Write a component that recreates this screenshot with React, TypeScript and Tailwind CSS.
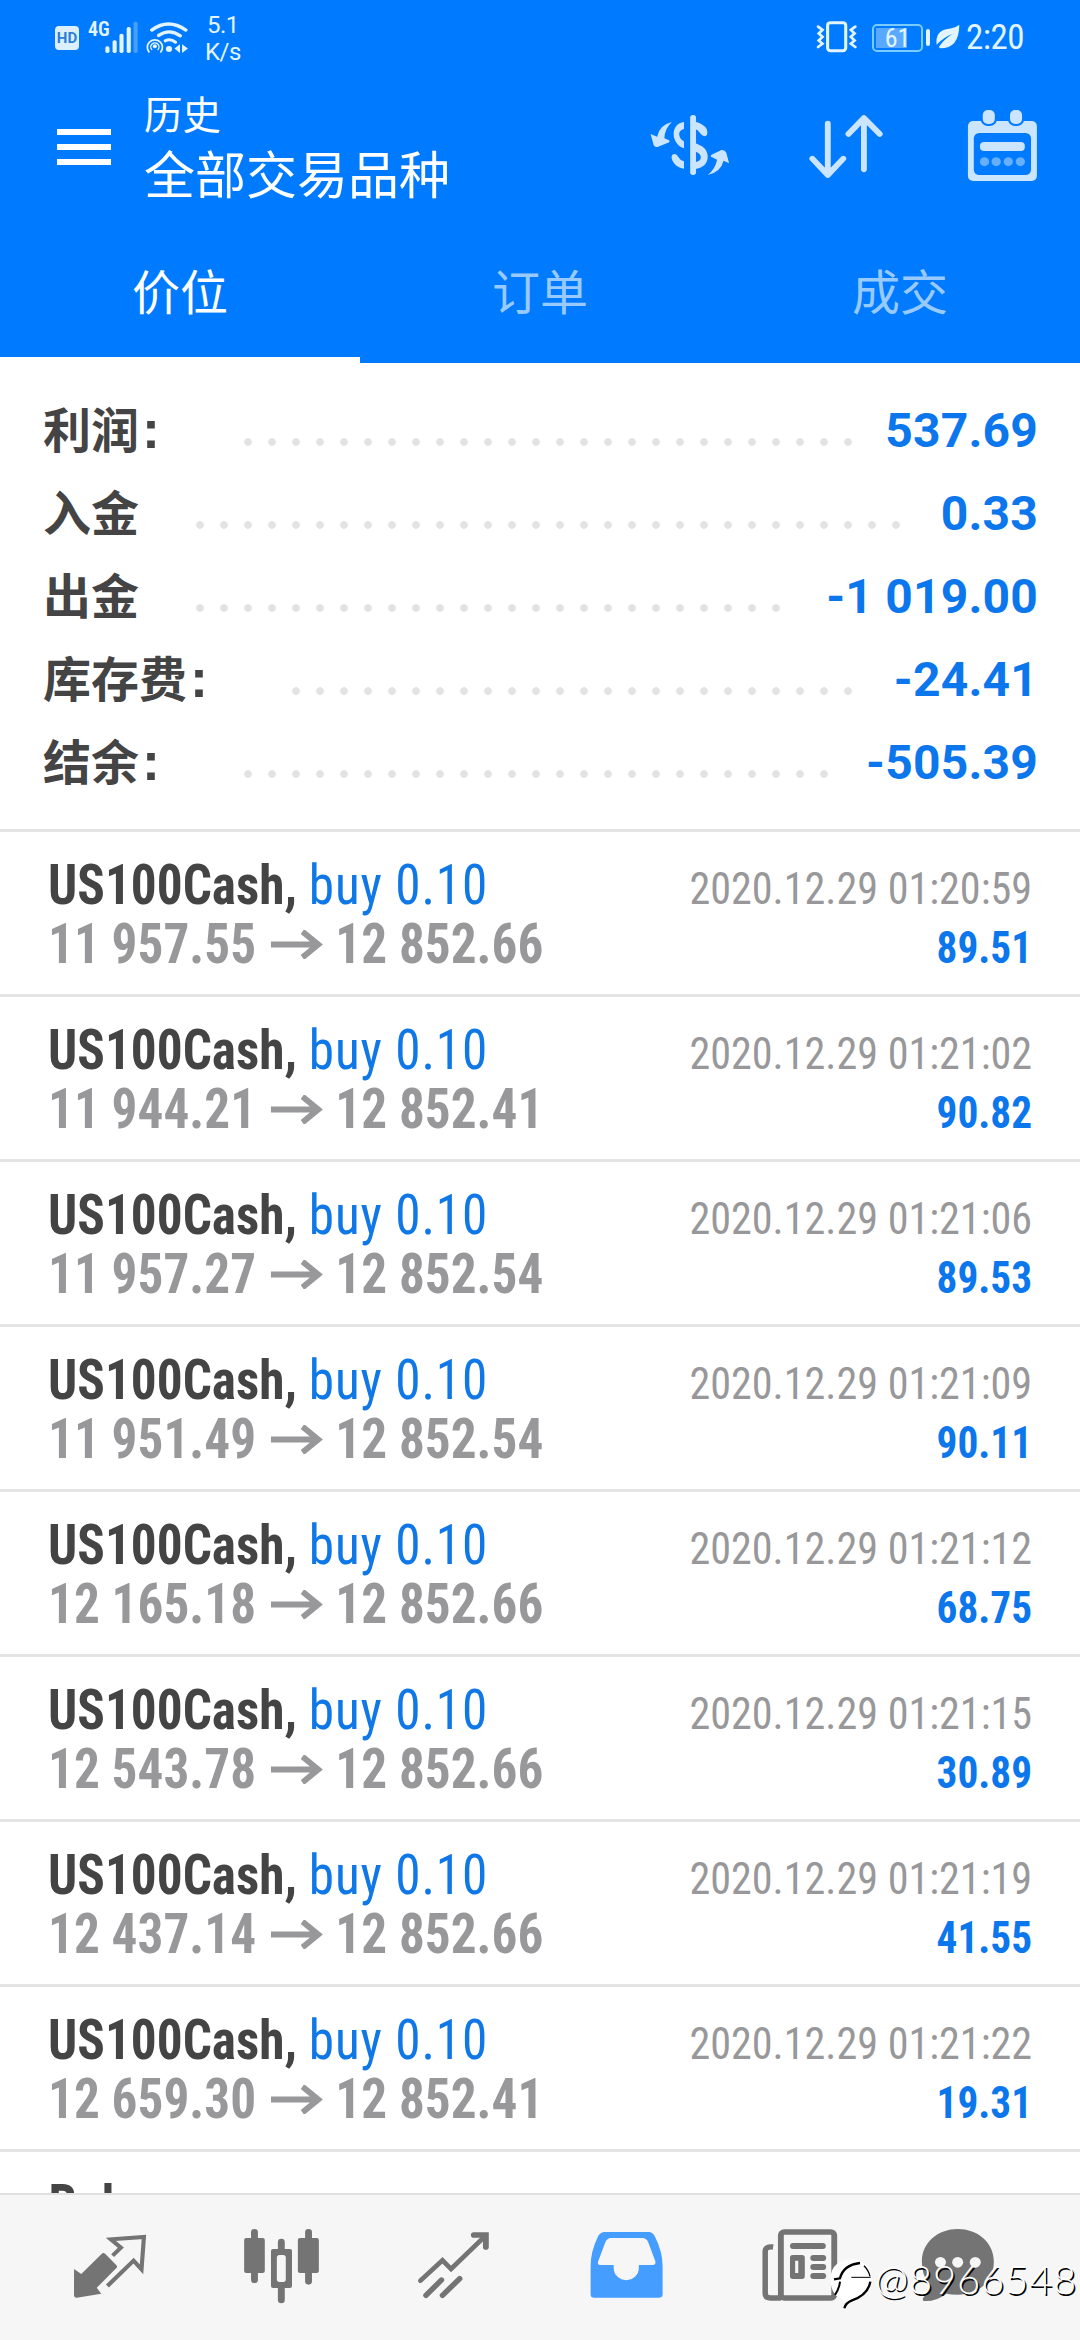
import React from 'react';

interface SummaryItem {
  label: string;
  colon: boolean;
  value: string;
  labelWidth: number;
  dots: number;
}

interface Deal {
  open: string;
  close: string;
  time: string;
  profit: string;
}

const SUMMARY: SummaryItem[] = [
  { label: '利润', colon: true, value: '537.69', labelWidth: 193, dots: 26 },
  { label: '入金', colon: false, value: '0.33', labelWidth: 145, dots: 30 },
  { label: '出金', colon: false, value: '-1 019.00', labelWidth: 145, dots: 25 },
  { label: '库存费', colon: true, value: '-24.41', labelWidth: 241, dots: 24 },
  { label: '结余', colon: true, value: '-505.39', labelWidth: 193, dots: 25 },
];

const DEALS: Deal[] = [
  { open: '11 957.55', close: '12 852.66', time: '2020.12.29 01:20:59', profit: '89.51' },
  { open: '11 944.21', close: '12 852.41', time: '2020.12.29 01:21:02', profit: '90.82' },
  { open: '11 957.27', close: '12 852.54', time: '2020.12.29 01:21:06', profit: '89.53' },
  { open: '11 951.49', close: '12 852.54', time: '2020.12.29 01:21:09', profit: '90.11' },
  { open: '12 165.18', close: '12 852.66', time: '2020.12.29 01:21:12', profit: '68.75' },
  { open: '12 543.78', close: '12 852.66', time: '2020.12.29 01:21:15', profit: '30.89' },
  { open: '12 437.14', close: '12 852.66', time: '2020.12.29 01:21:19', profit: '41.55' },
  { open: '12 659.30', close: '12 852.41', time: '2020.12.29 01:21:22', profit: '19.31' },
];

const StatusBar: React.FC = () => (
  <div className="flex h-[76px] items-start pl-[55px] text-[#e2f5ff]">
    <div className="mt-[26px] flex h-6 w-6 items-center justify-center rounded-[4px] bg-[#dcefff] text-[15px] leading-none font-bold text-[#2c7fd6]">
      HD
    </div>
    <span className="mt-[18px] ml-[9px] w-[17px] text-[20px] leading-[22px] font-semibold font-stretch-condensed">4G</span>
    <svg className="mt-5 h-[37px] w-[86px]" viewBox="306 60 250 110" preserveAspectRatio="none" fill="currentColor">
      <rect x="307" y="138" width="12" height="20" rx="5" />
      <rect x="328" y="120" width="12" height="38" rx="5" />
      <rect x="348" y="101" width="12" height="57" rx="5" />
      <rect x="369" y="81" width="12" height="77" rx="5" />
      <rect x="389" y="65" width="12" height="93" rx="5" opacity="0.3" />
      <g fill="none" stroke="currentColor" strokeLinecap="round">
        <path d="M442 90 Q490 54 541 90" strokeWidth="10" />
        <path d="M462 106 Q493 84 525 107" strokeWidth="10" />
        <path d="M481 122 Q496 114 511 126" strokeWidth="9" />
        <path d="M434 155 A22 22 0 1 1 468 155" strokeWidth="5" />
        <path d="M442 148 A12 12 0 1 1 460 148" strokeWidth="4" />
      </g>
      <circle cx="451" cy="138" r="6" />
      <circle cx="492" cy="146" r="9" />
      <path d="M524 132 V158 L508 145z M530 132 V158 L547 145z" />
    </svg>
    <div className="mt-[12px] ml-[14px] text-center text-[24px] leading-[27px] tracking-[-0.5px]">
      5.1
      <br />
      K/s
    </div>
    <svg className="mt-5 ml-auto h-[33px] w-[41px]" viewBox="800 60 120 100" preserveAspectRatio="none" fill="none" stroke="currentColor">
      <rect x="834" y="68" width="53" height="85" rx="8" strokeWidth="9" />
      <path d="M806 80 L819 90 L808 101 L819 111 L808 122 L819 132 L806 142" strokeWidth="8" strokeLinecap="round" />
      <path d="M915 80 L902 90 L913 101 L902 111 L913 122 L902 132 L915 142" strokeWidth="8" strokeLinecap="round" />
    </svg>
    <div className="relative mt-6 ml-[15px] h-7 w-[51px] rounded-[5px] border-2 border-[#78ccff] p-[2px]">
      <div className="h-full w-[31px] bg-[#58a9ff]" />
      <span className="absolute inset-0 text-center text-[26px] leading-[25px] font-stretch-condensed">61</span>
    </div>
    <div className="mt-[29px] ml-[3px] h-[17px] w-1 rounded-[2px] bg-current" />
    <svg className="mt-6 ml-[6px] h-[25px] w-6" viewBox="1148 70 69 76" preserveAspectRatio="none">
      <path d="M1215 72 Q1215 144 1160 144 L1156 140 Q1170 118 1196 100 Q1168 112 1150 133 Q1144 88 1190 84 Q1206 80 1215 72z" fill="currentColor" />
    </svg>
    <span className="mt-[17px] mr-[56px] ml-[6px] text-[35px] leading-[41px] tracking-[-0.5px] font-stretch-condensed">2:20</span>
  </div>
);

const ToolbarIcons: React.FC = () => (
  <div className="ml-auto flex text-[#cce5ff]">
    <svg className="h-[144px] w-[150px]" viewBox="232 228 436 432" preserveAspectRatio="none" fill="currentColor">
      <path d="M383 366 Q346 375 340 410 L321 402 L330 436 Q334 443 343 440 L375 427 Q379 423 373 420 L361 415 Q362 385 383 366z" />
      <path d="M487 525 Q526 515 533 482 L549 490 L541 458 Q537 449 527 450 L498 464 Q493 469 500 472 L514 479 Q510 505 487 525z" />
      <path d="M418 366 C400 368 388 382 388 402 C388 424 402 440 418 445 V424 Q404 417 404 402 Q404 391 418 387z" />
      <path d="M418 506 C400 503 386 492 382 474 Q381 462 391 462 Q397 462 401 470 Q406 480 418 484z" />
      <path d="M450 365 Q474 370 484 387 Q487 395 485 405 Q478 412 470 405 L462 396 Q458 389 450 388z" />
      <path d="M445 428 C475 436 487 450 487 470 C487 492 472 503 450 507 V487 Q467 484 467 472 Q467 458 445 453z" />
      <rect x="436" y="345" width="17" height="180" rx="8" />
    </svg>
    <svg className="h-[144px] w-[150px]" viewBox="668 228 436 432" preserveAspectRatio="none" fill="none" stroke="currentColor" strokeWidth="17" strokeLinecap="round" strokeLinejoin="round">
      <path d="M836 371 V525 M791 476 L836 525 L881 476" />
      <path d="M941 508 V354 M896 402 L941 354 L987 402" />
    </svg>
    <svg className="h-[144px] w-[160px]" viewBox="1104 228 464 432" preserveAspectRatio="none" fill="currentColor">
      <rect x="1243" y="363" width="200" height="180" rx="15" />
      <rect x="1260" y="399" width="166" height="126" rx="16" fill="#007aff" />
      <g stroke="#007aff" strokeWidth="12" paintOrder="stroke">
        <rect x="1286" y="330" width="35" height="42" rx="15" />
        <rect x="1365" y="330" width="35" height="42" rx="15" />
      </g>
      <rect x="1278" y="426" width="130" height="27" rx="12" />
      <g opacity="0.5">
        <circle cx="1291" cy="485" r="13.5" />
        <circle cx="1325" cy="485" r="13.5" />
        <circle cx="1360" cy="485" r="13.5" />
        <circle cx="1395" cy="485" r="13.5" />
      </g>
    </svg>
  </div>
);

const Header: React.FC = () => (
  <header className="flex h-[363px] shrink-0 flex-col bg-[#007aff] text-white">
    <StatusBar />
    <div className="flex h-[144px] items-start">
      <div className="mt-[53px] ml-[57px] flex w-[54px] flex-col gap-[9px]">
        <div className="h-[6px] bg-white" />
        <div className="h-[6px] bg-white" />
        <div className="h-[6px] bg-white" />
      </div>
      <div className="mt-[13px] ml-[33px]">
        <div className="text-[38.5px] leading-[54px]">历史</div>
        <div className="text-[51px] leading-[68px]">全部交易品种</div>
      </div>
      <ToolbarIcons />
    </div>
    <div className="grid flex-1 grid-cols-3 text-center text-[48px] leading-[148px]">
      <div className="border-b-[6px] border-white">
        <div className="h-[137px]">价位</div>
      </div>
      <div className="h-[137px] text-[#99caff]">订单</div>
      <div className="h-[137px] text-[#99caff]">成交</div>
    </div>
  </header>
);

const Summary: React.FC = () => (
  <section className="h-[469px] shrink-0 border-b-[3px] border-[#e4e4e4] pt-[26px] pr-[42px] pl-[43px] text-[48px] leading-[83px] font-bold">
    {SUMMARY.map(item => (
      <div key={item.label} className="flex h-[83px]">
        <span className="mt-px h-[82px] text-[#444444]" style={{ width: item.labelWidth }}>
          {item.label}
          {item.colon && <span className="ml-[3px] text-[54px] leading-none [font-family:'Liberation_Sans',sans-serif]">:</span>}
        </span>
        <span
          className="mt-[41px] h-6 bg-[radial-gradient(circle,#e3e3e3_3.5px,transparent_4.2px)] bg-[length:24px_24px]"
          style={{ width: item.dots * 24 }}
        />
        <span className="ml-auto tracking-[0.2px] whitespace-nowrap text-[#0c77ec]">{item.value}</span>
      </div>
    ))}
  </section>
);

const DealRow: React.FC<{ deal: Deal }> = ({ deal }) => (
  <div className="flex h-[165px] shrink-0 justify-between border-b-[3px] border-[#e4e4e4] pr-[48px] pl-[48px] whitespace-nowrap font-stretch-condensed">
    <div className="origin-left scale-x-[0.932] pt-6 text-[55px] leading-[59px]">
      <div>
        <span className="font-bold text-[#444444]">US100Cash,</span> <span className="tracking-[0.9px] text-[#0f78e6]">buy 0.10</span>
      </div>
      <div className="flex font-bold text-[#98989a]">
        <span>{deal.open}</span>
        <svg className="mt-[15px] mr-[13px] ml-[16px] h-[29px] w-[56px]" viewBox="0 0 56 29" fill="none" stroke="currentColor" strokeWidth="6">
          <path d="M0 14.5 H52 M34 1.5 L51 14.5 L34 27.5" />
        </svg>
        <span>{deal.close}</span>
      </div>
    </div>
    <div className="pt-[27px] text-right text-[45px] leading-[59px]">
      <div className="origin-right scale-x-[0.936] text-[#98989a]">{deal.time}</div>
      <div className="origin-right scale-x-[0.918] font-bold text-[#0c77ec]">{deal.profit}</div>
    </div>
  </div>
);

const NavIcon: React.FC<{ x: number; children: React.ReactNode }> = ({ x, children }) => (
  <svg className="h-[145px] w-[172px] shrink-0 text-[#747474]" viewBox={`${x} 165 499.5 435`} preserveAspectRatio="none" fill="currentColor">
    {children}
  </svg>
);

const BottomNav: React.FC = () => (
  <nav className="flex h-[147px] shrink-0 overflow-hidden border-t-2 border-[#e0e0e0] bg-[#f6f6f6] pl-[23px]">
    <NavIcon x={66.8}>
      <path d="M215 387 L236 402 L295 342 Q300 336 306 342 L338 376 Q342 380 338 384 L281 443 L294 461 L223 473 Q215 474 215 466z" />
      <path d="M327 347 L351 323 L322 298 L418 291 L411 388 L388 362 L312 438" fill="none" stroke="currentColor" strokeWidth="12" />
    </NavIcon>
    <NavIcon x={566.3}>
      <rect x="709" y="294" width="60" height="105" rx="6" />
      <rect x="729" y="267" width="20" height="162" rx="10" />
      <rect x="865" y="294" width="61" height="105" rx="6" />
      <rect x="886" y="267" width="20" height="167" rx="10" />
      <rect x="787" y="327" width="61" height="117" rx="6" />
      <rect x="807" y="296" width="20" height="194" rx="10" />
      <rect x="804" y="345" width="26" height="81" rx="8" fill="#f6f6f6" />
    </NavIcon>
    <NavIcon x={1065.8}>
      <g fill="none" stroke="currentColor" strokeWidth="14" strokeLinecap="round">
        <path d="M1221 422 L1285 361 L1310 387 L1408 289" />
        <path d="M1376 285 H1411 V321" strokeWidth="17" />
        <path d="M1237 466 L1282 420 M1285 466 L1335 416" strokeWidth="16" />
      </g>
    </NavIcon>
    <NavIcon x={-2.9}>
      <path
        fill="#459dff"
        fillRule="evenodd"
        d="M186 276 H318 Q328 278 334 290 Q356 335 356 378 V464 Q356 473 344 473 H158 Q147 473 147 464 V378 Q147 335 168 290 Q174 278 186 276z M206 294 H298 Q309 295 314 306 L335 364 Q337 375 328 375 H287 V384 A36 36 0 0 1 214 384 V375 H174 Q166 375 169 364 L190 306 Q195 295 206 294z"
      />
    </NavIcon>
    <NavIcon x={496.6}>
      <g fill="none" stroke="currentColor" strokeWidth="17">
        <rect x="699.5" y="276" width="155" height="198" rx="10" />
        <path d="M677 321 Q654 318 654 335 V460 Q654 474 668 474 H700" strokeWidth="16" />
      </g>
      <rect x="726" y="309" width="104" height="18" rx="9" />
      <path fillRule="evenodd" d="M734 345 H761 Q769 345 769 353 V409 Q769 417 761 417 H734 Q726 417 726 409 V353 Q726 345 734 345z M741 362 V399 H750 V362z" />
      <rect x="785" y="345" width="46" height="18" rx="9" />
      <rect x="785" y="372" width="46" height="18" rx="9" />
      <rect x="785" y="399" width="46" height="18" rx="9" />
    </NavIcon>
    <NavIcon x={996.1}>
      <path d="M1213 267 C1272 267 1318 308 1318 365 C1318 425 1272 464 1213 464 Q1195 464 1180 461 Q1150 485 1116 483 Q1108 482 1114 472 Q1130 455 1129 430 Q1109 405 1109 365 C1109 308 1155 267 1213 267z" />
      <g fill="#f6f6f6">
        <circle cx="1163" cy="367" r="16" />
        <circle cx="1213" cy="367" r="16" />
        <circle cx="1264" cy="367" r="16" />
      </g>
    </NavIcon>
  </nav>
);

const Watermark: React.FC = () => (
  <div className="absolute right-0 bottom-0 flex h-[90px] items-start whitespace-nowrap">
    <svg className="mt-[8px] h-[52px] w-[45px]" viewBox="55 55 135 156" preserveAspectRatio="none">
      <path d="M60 112 Q64 62 125 58 Q176 64 182 114 Q178 160 130 182 L100 190 Q96 172 76 168 Q58 150 60 112z" fill="#ffffff" />
      <g fill="none" stroke="#000000">
        <path d="M70 119 L88 116 Q98 76 148 70" strokeWidth="7" />
        <path d="M122 113 H180" strokeWidth="3" />
        <path d="M88 126 Q86 146 73 166" strokeWidth="6" />
        <path d="M160 78 Q174 92 178 110" strokeWidth="4" />
        <path d="M179 126 Q172 166 124 182 Q104 190 101 206" strokeWidth="7" />
      </g>
    </svg>
    <span className="mr-[3px] ml-px text-[40px] leading-[59px] font-light tracking-[0.8px] text-white [font-family:Lato,sans-serif] [text-shadow:1.5px_1.5px_0_#000]">
      @8966548
    </span>
  </div>
);

const App: React.FC = () => {
  return (
    <div className="relative flex h-[2340px] w-[1080px] flex-col overflow-hidden bg-white [font-family:Roboto,'Noto_Sans_CJK_SC',sans-serif]">
      <Header />
      <Summary />
      <main className="flex flex-1 flex-col overflow-hidden">
        {DEALS.map(deal => (
          <DealRow key={deal.time} deal={deal} />
        ))}
        <div className="h-[41px] origin-left scale-x-[0.932] overflow-hidden pt-6 pl-[52px] text-[55px] leading-[59px] font-bold text-[#444444] font-stretch-condensed">
          Balance
        </div>
      </main>
      <BottomNav />
      <Watermark />
    </div>
  );
};

export default App;
